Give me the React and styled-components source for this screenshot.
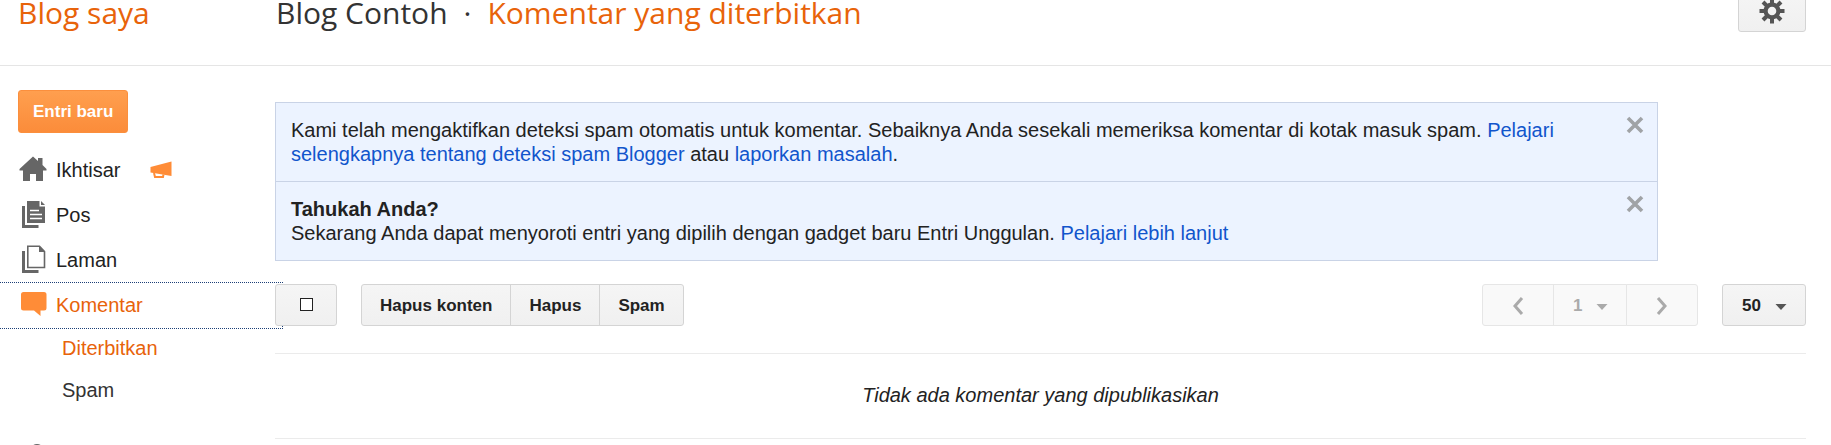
import React from 'react';
import styled, { createGlobalStyle, css } from 'styled-components';

const GlobalStyle = createGlobalStyle`
    *{
        box-sizing: border-box;
    }

    body{
        margin: 0;
        background-color: #fff;
        color: #222;
        font-family: 'Liberation Sans', Arial, sans-serif;
        font-size: 20px;
        line-height: 24px;
    }

    a{
        color: #15c;
        text-decoration: none;
    }
`;

function HomeIcon() {
    return (
        <svg width="30" height="30" viewBox="0 0 30 30" fill="#666" aria-hidden="true">
            <path d="M15 1.5 L20 6 V3 H24.5 V10 L28.5 14 V15.5 H25 V26 H18 V19 H12 V26 H5 V15.5 H1.5 V14 Z" />
        </svg>
    )
}

function PostsIcon() {
    return (
        <svg width="30" height="30" viewBox="0 0 30 30" fill="#666" aria-hidden="true">
            <path d="M4 6 H7 V25 H20.5 V28 H4 Z" />
            <path d="M9 1 H21.5 V6.5 H27 V23 H9 Z" />
            <path d="M23 1 L27 5 H23 Z" />
            <path d="M12 10.5 H21 M12 14.5 H24 M12 18.5 H24" stroke="#fff" strokeWidth="1.6" />
        </svg>
    )
}

function PagesIcon() {
    return (
        <svg width="30" height="30" viewBox="0 0 30 30" fill="#666" aria-hidden="true">
            <path d="M4 6 H7 V25 H20.5 V28 H4 Z" />
            <path d="M9.8 1.3 H21.5 L26.5 6.5 V22.5 H9.8 Z" fill="#fff" stroke="#666" strokeWidth="1.6" />
            <path d="M21 1 L27 7 H21 Z" />
        </svg>
    )
}

function CommentIcon() {
    return (
        <svg width="30" height="30" viewBox="0 0 30 30" fill="#ff8c37" aria-hidden="true">
            <path d="M5.5 2 H26 Q28.5 2 28.5 4.5 V18 Q28.5 20.5 26 20.5 H22.5 V26 L16 20.5 H5.5 Q3 20.5 3 18 V4.5 Q3 2 5.5 2 Z" />
        </svg>
    )
}

function MegaphoneIcon() {
    return (
        <svg width="22" height="18" viewBox="0 0 22 18" fill="#ff8c37" aria-hidden="true">
            <path d="M0.5 6 L21.5 0.5 V15 L0.5 11.5 Z" />
            <path d="M4 12 L5 16 H13 L13.5 13.5" fill="none" stroke="#ff8c37" strokeWidth="2" />
        </svg>
    )
}

function PersonIcon() {
    return (
        <svg width="30" height="30" viewBox="0 0 30 30" fill="#666" aria-hidden="true">
            <circle cx="19" cy="8" r="7" />
            <path d="M7 28 Q7 17 19 17 Q30 17 30 28 Z" />
        </svg>
    )
}

function CogIcon() {
    return (
        <svg width="26" height="26" viewBox="0 0 26 26" aria-hidden="true">
            <circle cx="13" cy="13" r="6.4" fill="none" stroke="#555" strokeWidth="4.2" />
            <g stroke="#555" strokeWidth="4">
                <path d="M13 0.5 V6 M13 20 V25.5 M0.5 13 H6 M20 13 H25.5" />
                <path d="M4 4 L8.5 8.5 M17.5 17.5 L22 22 M22 4 L17.5 8.5 M8.5 17.5 L4 22" />
            </g>
        </svg>
    )
}

function Chevron({ d }) {
    return (
        <svg width="12" height="20" viewBox="0 0 12 20" aria-hidden="true">
            <path d={d} fill="none" stroke="#aaa" strokeWidth="3" />
        </svg>
    )
}

function Notice({ children }) {
    return (
        <NoticeStyled>
            <p>{children}</p>
            <CloseButton type="button" aria-label="Tutup">
                <svg width="18" height="18" viewBox="0 0 18 18" aria-hidden="true">
                    <path d="M2 2 L16 16 M16 2 L2 16" stroke="#a0a3a6" strokeWidth="3.6" />
                </svg>
            </CloseButton>
        </NoticeStyled>
    )
}

function Dropdown({ label, value, disabled }) {
    return (
        <DropdownStyled $disabled={disabled}>
            <select aria-label={label} defaultValue={value} disabled={disabled}>
                <option value={value}>{value}</option>
            </select>
            <svg width="12" height="6" viewBox="0 0 12 6" aria-hidden="true">
                <path d="M0.5 0 H11.5 L6 6 Z" fill="currentColor" />
            </svg>
        </DropdownStyled>
    )
}

function App() {
    return (
        <Page>
            <GlobalStyle />
            <Header>
                <h2><a href="#blogs">Blog saya</a></h2>
                <h1>
                    <span>Blog Contoh</span>
                    <span>·</span>
                    <strong>Komentar yang diterbitkan</strong>
                </h1>
                <SettingsButton type="button" aria-label="Setelan">
                    <CogIcon />
                </SettingsButton>
            </Header>
            <Body>
                <Sidebar>
                    <NewPostButton type="button">Entri baru</NewPostButton>
                    <nav>
                        <NavItem href="#ikhtisar"><HomeIcon />Ikhtisar<Flag><MegaphoneIcon /></Flag></NavItem>
                        <NavItem href="#pos"><PostsIcon />Pos</NavItem>
                        <NavItem href="#laman"><PagesIcon />Laman</NavItem>
                        <NavItem href="#komentar" $active $focused><CommentIcon />Komentar</NavItem>
                        <SubItem href="#diterbitkan" $active>Diterbitkan</SubItem>
                        <SubItem href="#spam">Spam</SubItem>
                        <NavSection>
                            <NavItem href="#profil" aria-label="Profil"><PersonIcon /></NavItem>
                        </NavSection>
                    </nav>
                </Sidebar>
                <Main>
                    <Notices>
                        <Notice>
                            Kami telah mengaktifkan deteksi spam otomatis untuk komentar. Sebaiknya Anda sesekali memeriksa komentar di kotak masuk spam. <a href="#deteksi">Pelajari selengkapnya tentang deteksi spam Blogger</a> atau <a href="#masalah">laporkan masalah</a>.
                        </Notice>
                        <Notice>
                            <b>Tahukah Anda?</b><br />
                            Sekarang Anda dapat menyoroti entri yang dipilih dengan gadget baru Entri Unggulan. <a href="#unggulan">Pelajari lebih lanjut</a>
                        </Notice>
                    </Notices>
                    <Toolbar>
                        <SelectAll>
                            <input type="checkbox" aria-label="Pilih semua" />
                        </SelectAll>
                        <Group>
                            <ToolButton type="button">Hapus konten</ToolButton>
                            <ToolButton type="button">Hapus</ToolButton>
                            <ToolButton type="button">Spam</ToolButton>
                        </Group>
                        <Pager>
                            <PagerButton type="button" aria-label="Sebelumnya" disabled><Chevron d="M10 2 L3 10 L10 18" /></PagerButton>
                            <Dropdown label="Halaman" value="1" disabled />
                            <PagerButton type="button" aria-label="Berikutnya" disabled><Chevron d="M2 2 L9 10 L2 18" /></PagerButton>
                        </Pager>
                        <Dropdown label="Komentar per halaman" value="50" />
                    </Toolbar>
                    <Empty>Tidak ada komentar yang dipublikasikan</Empty>
                </Main>
            </Body>
        </Page>
    )
}

const control = css`
    height: 42px;
    border: 1px solid #d4d4d4;
    border-radius: 3px;
    background: linear-gradient(#f5f5f5, #f0f0f0);
    color: #222;
    font-family: inherit;
    font-size: 17px;
    font-weight: bold;
    line-height: 24px;
`;

const Page = styled.div`
    height: 100vh;
    overflow: hidden;
`;

const Header = styled.header`
    display: flex;
    align-items: flex-end;
    height: 66px;
    padding: 0 25px 33px 18px;
    border-bottom: 1px solid #e5e5e5;

    h1, h2{
        margin: 0;
        font-family: 'Open Sans', sans-serif;
        font-size: 30px;
        font-weight: normal;
        line-height: 38px;
    }

    h2{
        flex: 0 0 258px;
    }

    h1{
        display: flex;
        flex: 1;
        gap: 16px;
        color: #333;
    }

    h2 a, strong{
        color: #e8630a;
        font-weight: normal;
    }
`;

const SettingsButton = styled.button`
    ${control}
    display: flex;
    align-items: center;
    justify-content: center;
    width: 68px;
    padding: 0;
`;

const Body = styled.div`
    display: flex;
    align-items: flex-start;
`;

const Sidebar = styled.aside`
    flex: 0 0 275px;
    padding-top: 24px;
`;

const NewPostButton = styled.button`
    height: 43px;
    margin: 0 0 15px 18px;
    padding: 0 14px;
    border: 1px solid #fb8f3d;
    border-radius: 3px;
    background: linear-gradient(#ff9f4f, #fb8c3a);
    color: #fff;
    font-family: inherit;
    font-size: 17px;
    font-weight: bold;
`;

const NavItem = styled.a`
    display: flex;
    align-items: center;
    gap: 8px;
    height: 45px;
    margin-right: -7px;
    padding: 0 0 2px 18px;
    color: ${({ $active }) => ($active ? '#e8630a' : '#222')};
    outline: ${({ $focused }) => ($focused ? '1px dotted #1c3f77' : 'none')};
`;

const Flag = styled.span`
    display: flex;
    margin-left: 22px;
`;

const SubItem = styled.a`
    display: flex;
    align-items: center;
    height: 42px;
    padding: 0 0 2px 62px;
    color: ${({ $active }) => ($active ? '#e8630a' : '#333')};
`;

const NavSection = styled.div`
    padding-top: 24px;
`;

const Main = styled.main`
    z-index: 1;
    flex: 1;
    min-width: 0;
    padding: 36px 25px 0 0;
`;

const Notices = styled.div`
    max-width: 1383px;
    border: 1px solid #c9d3e6;
    background-color: #ecf3ff;
`;

const NoticeStyled = styled.div`
    display: flex;
    align-items: flex-start;
    justify-content: space-between;
    padding: 13px 13px 13px 15px;

    & + &{
        border-top: 1px solid #c9d3e6;
    }

    p{
        flex: 1;
        max-width: 1290px;
        margin: 2px 0;
    }
`;

const CloseButton = styled.button`
    display: flex;
    padding: 0;
    border: none;
    background: none;
`;

const Toolbar = styled.div`
    display: flex;
    gap: 24px;
    padding: 23px 0 27px;
    border-bottom: 1px solid #ebebeb;
`;

const SelectAll = styled.label`
    ${control}
    display: flex;
    align-items: center;
    justify-content: center;
    width: 62px;
    padding-bottom: 2px;

    input{
        appearance: none;
        width: 13px;
        height: 13px;
        margin: 0;
        border: 1px solid #222;
        background-color: #fff;
    }
`;

const Group = styled.div`
    display: flex;

    > * + *{
        margin-left: -1px;
    }

    > :not(:first-child){
        border-top-left-radius: 0;
        border-bottom-left-radius: 0;
    }

    > :not(:last-child){
        border-top-right-radius: 0;
        border-bottom-right-radius: 0;
    }
`;

const ToolButton = styled.button`
    ${control}
    padding: 2px 18px 0;
`;

const Pager = styled(Group)`
    margin-left: auto;
`;

const PagerButton = styled.button`
    ${control}
    display: flex;
    align-items: center;
    justify-content: center;
    width: 72px;
    padding: 2px 0 0;
    border-color: #e6e6e6;
    background: #f9f9f9;
`;

const DropdownStyled = styled.div`
    ${control}
    display: grid;
    align-items: center;
    width: ${({ $disabled }) => ($disabled ? '74px' : '84px')};
    border-color: ${({ $disabled }) => ($disabled ? '#e6e6e6' : '#d4d4d4')};
    background: ${({ $disabled }) => ($disabled ? '#f9f9f9' : 'linear-gradient(#f5f5f5, #f0f0f0)')};
    color: ${({ $disabled }) => ($disabled ? '#aaa' : '#555')};

    select, svg{
        grid-area: 1 / 1;
    }

    select{
        appearance: none;
        height: 40px;
        padding: 2px 19px 0;
        border: none;
        background: none;
        color: ${({ $disabled }) => ($disabled ? '#aaa' : '#222')};
        font: inherit;
        opacity: 1;
    }

    svg{
        justify-self: end;
        margin: 4px 18px 0 0;
        pointer-events: none;
    }
`;

const Empty = styled.p`
    margin: 0;
    padding: 29px 0 31px;
    border-bottom: 1px solid #ebebeb;
    font-style: italic;
    text-align: center;
`;

export default App
